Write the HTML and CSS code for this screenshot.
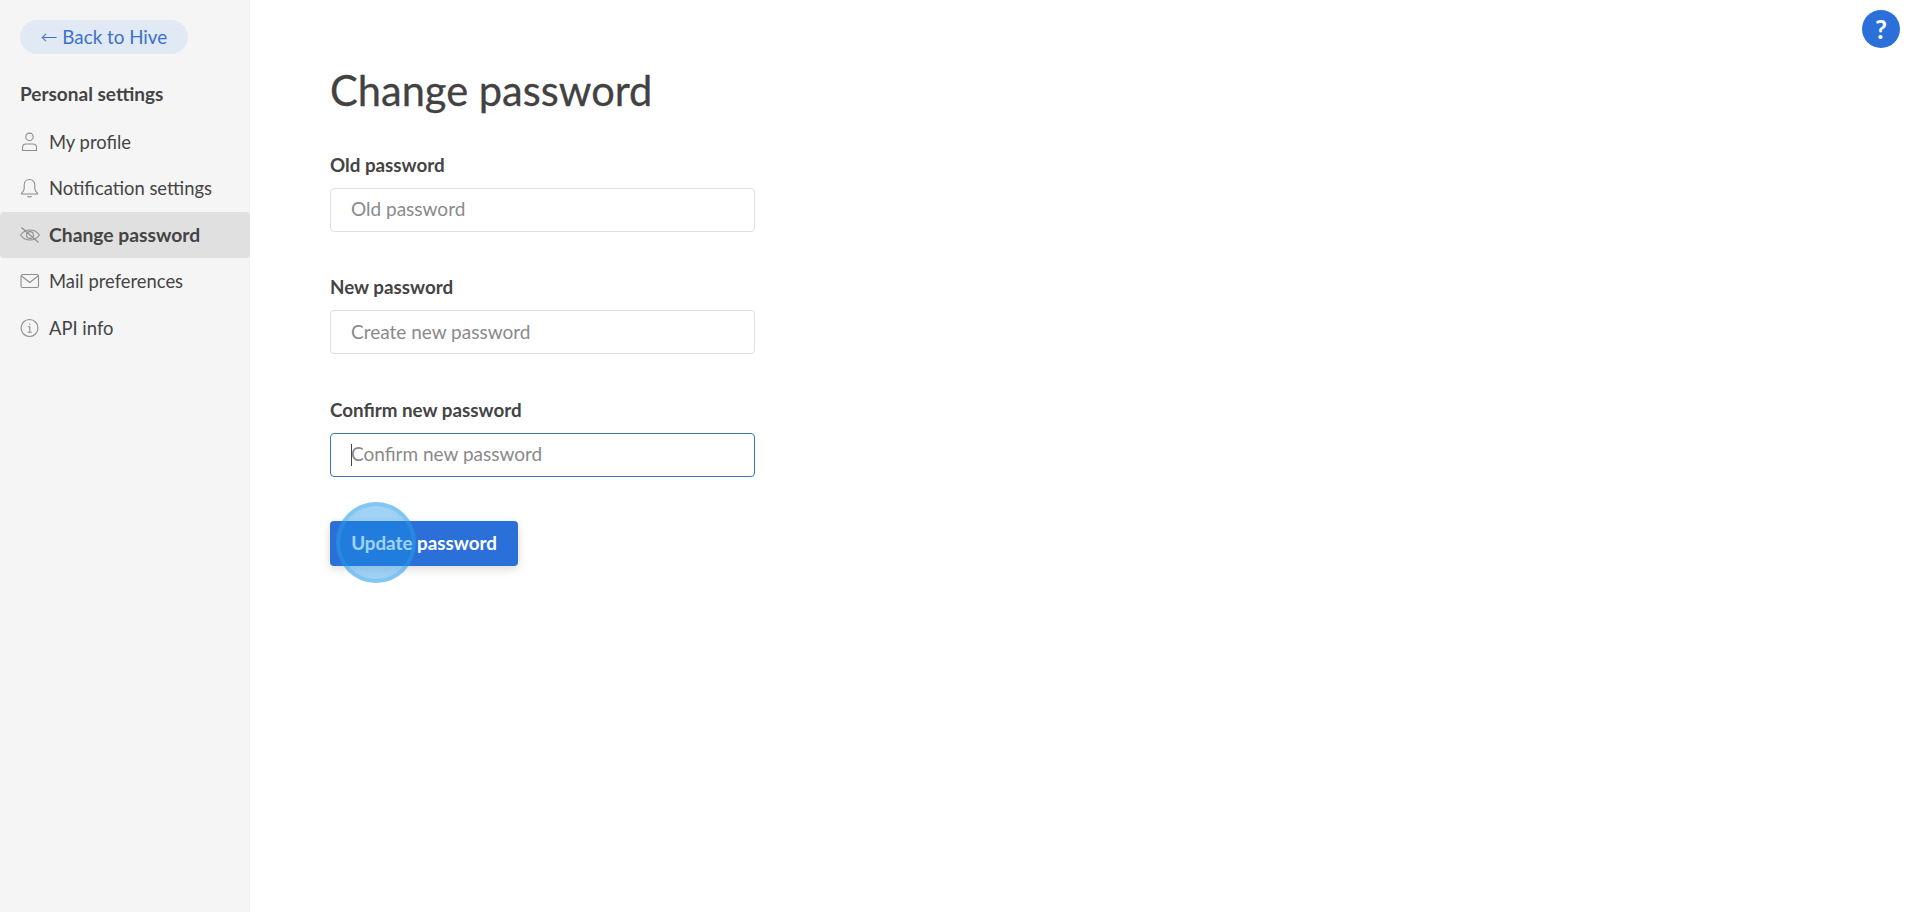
FILE: index.html
```html
<!DOCTYPE html>
<html lang="en">

<head>
	<meta charset="UTF-8">
	<title>Change password</title>
	<link rel="stylesheet" href="styles.css">
</head>

<body>
	<div class="layout">
		<aside class="sidebar">
			<a class="back-link" href="#"><span class="back-arrow">←</span> Back to Hive</a>
			<div class="side-title">Personal settings</div>
			<nav class="side-nav">
				<a class="nav-item" href="#">
					<svg class="nav-icon" viewBox="0 0 20 20"><circle cx="9.500" cy="4.800" r="3.700"/><path d="M2.500 18.500v-3c0-2 1.500-3.500 3.500-3.500h7c2 0 3.500 1.500 3.500 3.500v3z"/></svg>
					My profile
				</a>
				<a class="nav-item" href="#">
					<svg class="nav-icon" viewBox="0 0 20 20"><path d="M9.500 1.500c-3.300 0-5.300 2.400-5.300 5.400v3.500c0 2-1.300 3.300-2.700 4.800v.8h16v-.8c-1.400-1.500-2.700-2.800-2.700-4.800V6.900c0-3-2-5.400-5.300-5.400z"/><path d="M7.500 18c.5 1.300 3.500 1.300 4 0"/></svg>
					Notification settings
				</a>
				<a class="nav-item active" href="#">
					<svg class="nav-icon" viewBox="0 0 20 20"><path d="M.5 10c2.500-3.400 5.500-5 9.500-5s7 1.600 9.500 5c-2.500 3.400-5.500 5-9.500 5s-7-1.600-9.500-5z"/><circle cx="10" cy="10" r="3.400"/><path d="M1.500 2.500l17 15"/></svg>
					Change password
				</a>
				<a class="nav-item" href="#">
					<svg class="nav-icon" viewBox="0 0 20 20"><rect x="1" y="3.500" width="17.500" height="13" rx="1.500"/><path d="M1.500 5l8.250 6.500L18 5"/></svg>
					Mail preferences
				</a>
				<a class="nav-item" href="#">
					<svg class="nav-icon" viewBox="0 0 20 20"><circle cx="9.500" cy="10" r="8.500"/><path d="M7.800 8.800h2v5.400M7.600 14.200h4.200M9.700 5.400v1.300"/></svg>
					API info
				</a>
			</nav>
		</aside>

		<main class="content">
			<h1 class="page-title">Change password</h1>
			<form class="password-form">
				<div class="field">
					<label for="old">Old password</label>
					<input type="password" id="old" placeholder="Old password">
				</div>
				<div class="field">
					<label for="new">New password</label>
					<input type="password" id="new" placeholder="Create new password">
				</div>
				<div class="field">
					<label for="confirm">Confirm new password</label>
					<div class="input-wrap">
						<input type="password" id="confirm" class="focused" placeholder="Confirm new password">
						<span class="caret"></span>
					</div>
				</div>
				<div class="btn-wrap">
					<button type="button" class="btn">Update password</button>
					<span class="click-ring"></span>
				</div>
			</form>
		</main>
	</div>

	<button type="button" class="help-btn">?</button>
</body>

</html>
```

FILE: styles.css
```css
* {
	margin: 0;
	padding: 0;
	box-sizing: border-box;
}

html,
body {
	height: 100%;
}

body {
	font-family: "Lato", "Liberation Sans", sans-serif;
	color: #3f3f3f;
	background-color: #fff;
}

a {
	color: inherit;
	text-decoration: none;
}

.layout {
	display: flex;
	height: 100%;
}

.sidebar {
	width: 250px;
	flex-shrink: 0;
	padding-top: 20px;
	background-color: #f5f5f5;
	border-right: 1px solid #f0f0f0;
}

.back-link {
	display: block;
	width: 168px;
	height: 34px;
	margin-left: 20px;
	border-radius: 17px;
	background-color: #e1e9f4;
	color: #3b72c9;
	font-size: 18.800px;
	line-height: 34px;
	text-align: center;
}

.back-arrow {
	font-family: "DejaVu Sans", sans-serif;
	font-size: 20px;
	font-weight: 300;
}

.side-title {
	margin: 29px 0 0 20px;
	font-size: 19px;
	font-weight: 700;
	line-height: 22px;
	color: #444;
}

.side-nav {
	margin-top: 13.500px;
}

.nav-item {
	display: flex;
	align-items: center;
	gap: 9px;
	height: 46.500px;
	padding-left: 20px;
	font-size: 18.400px;
	color: #444;
	border-radius: 4px;
}

.nav-item.active {
	width: 250px;
	background-color: #e0e0e0;
	font-size: 19.300px;
	font-weight: 700;
}

.nav-icon {
	width: 20px;
	height: 20px;
	flex-shrink: 0;
	fill: none;
	stroke: #8e8e8e;
	stroke-width: 1.100;
}

.content {
	flex: 1;
	padding: 65px 0 0 80px;
}

.page-title {
	font-size: 41.600px;
	font-weight: 400;
	line-height: 50px;
	color: #424242;
	-webkit-text-stroke: 0.3px #424242;
}

.password-form {
	width: 425px;
	margin-top: 38.800px;
}

.field {
	margin-bottom: 44.500px;
}

.field label {
	display: block;
	margin-bottom: 12px;
	font-size: 18.800px;
	font-weight: 700;
	line-height: 22px;
	color: #444;
}

.field input {
	display: block;
	width: 100%;
	height: 44px;
	padding: 0 20px 2px;
	border: 1px solid #e0e0e0;
	border-radius: 4px;
	outline: none;
	font-family: inherit;
	font-size: 19px;
	color: #444;
}

.field input::placeholder {
	color: #8a8a8a;
	opacity: 1;
}

.field input.focused {
	border-color: #3b78bd;
}

.input-wrap {
	position: relative;
}

.caret {
	position: absolute;
	left: 21px;
	top: 11px;
	width: 1px;
	height: 22px;
	background-color: #444;
}

.btn-wrap {
	position: relative;
	width: 188px;
	margin-top: 1px;
}

.btn {
	display: block;
	width: 188px;
	height: 45px;
	padding-bottom: 2px;
	border: none;
	border-radius: 4px;
	background-color: #2b70d8;
	box-shadow: 0 3px 10px rgba(0, 0, 0, 0.15);
	color: #fff;
	font-family: inherit;
	font-size: 18.800px;
	font-weight: 700;
}

.click-ring {
	position: absolute;
	left: 6px;
	top: -19px;
	width: 80px;
	height: 81px;
	border: 4px solid rgba(60, 170, 240, 0.3);
	border-radius: 50%;
	background-color: rgba(17, 142, 230, 0.4);
}

.help-btn {
	position: absolute;
	top: 10px;
	right: 20px;
	width: 38px;
	height: 38px;
	border: none;
	border-radius: 50%;
	background-color: #2b70d8;
	color: #fff;
	font-family: "Lato", sans-serif;
	font-size: 26px;
	font-weight: 700;
}
```
